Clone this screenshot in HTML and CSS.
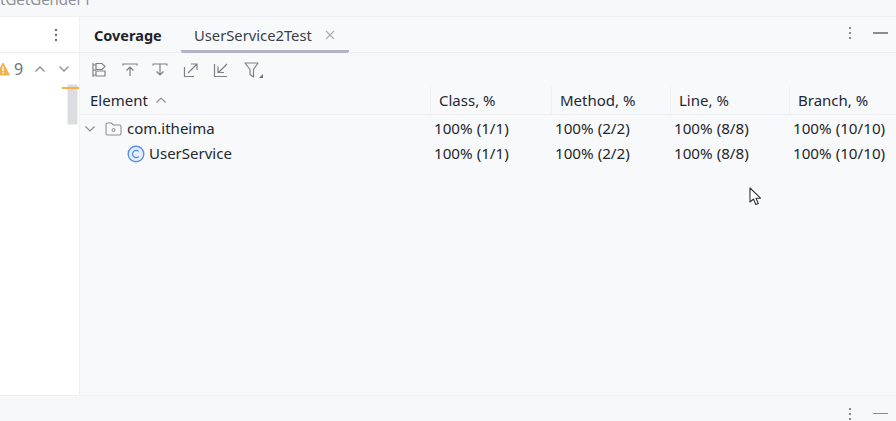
FILE: index.html
```html
<!DOCTYPE html>
<html lang="en">
<head>
<meta charset="utf-8">
<title>Coverage</title>
<link rel="stylesheet" href="styles.css">
</head>
<body>
<div class="app">
  <div class="topstrip"><span class="crumb">tGetGender1</span></div>
  <div class="main">
    <aside class="side">
      <div class="side-head">
        <svg class="ico16" viewBox="0 0 16 16"><g fill="#6c707e"><circle cx="8" cy="3" r="1.200"/><circle cx="8" cy="8" r="1.200"/><circle cx="8" cy="13" r="1.200"/></g></svg>
      </div>
      <div class="side-nav">
        <svg class="warn" viewBox="0 0 14 14"><path d="M7 1 L13.400 13 H.6 Z" fill="#f2b14a" stroke="#f2b14a" stroke-linejoin="round"/><rect x="6.300" y="4.500" width="1.400" height="4.600" fill="#fff"/><rect x="6.300" y="10" width="1.400" height="1.500" fill="#fff"/></svg>
        <span class="warn-count">9</span>
        <svg class="chev" viewBox="0 0 12 8"><path d="M1.500 6.500 L6 2 L10.500 6.500" fill="none" stroke="#8b8f99" stroke-width="1.300"/></svg>
        <svg class="chev" viewBox="0 0 12 8"><path d="M1.500 1.500 L6 6 L10.500 1.500" fill="none" stroke="#8b8f99" stroke-width="1.300"/></svg>
      </div>
      <div class="scroll-mark"></div>
      <div class="scroll-thumb"></div>
    </aside>
    <section class="panel">
      <div class="tabs">
        <span class="tab-title">Coverage</span>
        <span class="tab">UserService2Test
          <svg class="close" viewBox="0 0 10 10"><path d="M1 1 L9 9 M9 1 L1 9" stroke="#a9adb6" stroke-width="1.100"/></svg>
        </span>
        <span class="tab-actions">
          <svg class="ico16" viewBox="0 0 16 16"><g fill="#6c707e"><circle cx="8" cy="3" r="1.100"/><circle cx="8" cy="8" r="1.100"/><circle cx="8" cy="13" r="1.100"/></g></svg>
          <span class="minimize"></span>
        </span>
      </div>
      <div class="toolbar">
        <svg class="tool" viewBox="0 0 16 16"><path d="M2 1v14M2 3h3M2 8h3M2 13h3M5 1.500h6l3 3-3 3H5zM5 9h9v5H5z" fill="none" stroke="#7d818c" stroke-width="1.200"/></svg>
        <svg class="tool" viewBox="0 0 16 16"><path d="M1 3.500V2h14v1.500M8 14V5M4.500 8.500 8 5l3.500 3.500" fill="none" stroke="#7d818c" stroke-width="1.200"/></svg>
        <svg class="tool" viewBox="0 0 16 16"><path d="M1 3.500V2h14v1.500M8 2.500V13M4.500 9.500 8 13l3.500-3.500" fill="none" stroke="#7d818c" stroke-width="1.200"/></svg>
        <svg class="tool" viewBox="0 0 16 16"><path d="M1.500 5v9.500h9.500M5 11 14 2M8 2h6v6" fill="none" stroke="#7d818c" stroke-width="1.200"/></svg>
        <svg class="tool" viewBox="0 0 16 16"><path d="M1.500 2v12.500H14M14 2 5.500 10.500M5 4.500v6h6" fill="none" stroke="#7d818c" stroke-width="1.200"/></svg>
        <svg class="tool tool-wide" viewBox="0 0 20 16"><path d="M1 1h13L9.500 7.500V15L6 12.500V7.500Z" fill="none" stroke="#7d818c" stroke-width="1.200" stroke-linejoin="round"/><path d="M19 12v4h-4z" fill="#6c707e"/></svg>
      </div>
      <div class="grid grid-head">
        <div class="hcell first">Element
          <svg class="sort" viewBox="0 0 12 8"><path d="M1.500 6.500 6 2l4.500 4.500" fill="none" stroke="#8b8f99" stroke-width="1.200"/></svg>
        </div>
        <div class="hcell">Class, %</div>
        <div class="hcell">Method, %</div>
        <div class="hcell">Line, %</div>
        <div class="hcell">Branch, %</div>
      </div>
      <div class="grid row">
        <div class="cell name">
          <svg class="expander" viewBox="0 0 12 8"><path d="M1.500 1.500 6 6l4.500-4.500" fill="none" stroke="#8b8f99" stroke-width="1.200"/></svg>
          <svg class="folder" viewBox="0 0 17 16"><path d="M1 3.500C1 2.700 1.700 2 2.500 2h3.800l2 2h6.200c.8 0 1.500.7 1.500 1.500v7c0 .8-.7 1.500-1.500 1.500h-12C1.700 14 1 13.300 1 12.500Z" fill="none" stroke="#8b8f99" stroke-width="1.100"/><circle cx="8.500" cy="9" r="1.500" fill="none" stroke="#8b8f99"/></svg>
          com.itheima
        </div>
        <div class="cell">100% (1/1)</div>
        <div class="cell">100% (2/2)</div>
        <div class="cell">100% (8/8)</div>
        <div class="cell">100% (10/10)</div>
      </div>
      <div class="grid row">
        <div class="cell name nested">
          <svg class="classicon" viewBox="0 0 18 18"><circle cx="9" cy="9" r="7.800" fill="#e7effd" stroke="#5a8fe8" stroke-width="1.400"/><path d="M11.700 6.500A3.600 3.600 0 1 0 11.700 11.500" fill="none" stroke="#5a8fe8" stroke-width="1.300"/></svg>
          UserService
        </div>
        <div class="cell">100% (1/1)</div>
        <div class="cell">100% (2/2)</div>
        <div class="cell">100% (8/8)</div>
        <div class="cell">100% (10/10)</div>
      </div>
      <svg class="cursor" viewBox="0 0 14 20"><path d="M1 1v14l3.500-3 2.300 5.500 2.500-1-2.300-5.300H11.500Z" fill="#fff" stroke="#333" stroke-width="1.100" stroke-linejoin="round"/></svg>
    </section>
  </div>
  <div class="bottombar">
    <svg class="ico16" viewBox="0 0 16 16"><g fill="#6c707e"><circle cx="8" cy="3" r="1.100"/><circle cx="8" cy="8" r="1.100"/><circle cx="8" cy="13" r="1.100"/></g></svg>
    <span class="minimize"></span>
  </div>
</div>
</body>
</html>
```
FILE: styles.css
```css
* { box-sizing: border-box; }
html, body { margin: 0; height: 100%; }
body {
  font-family: "Noto Sans", "Open Sans", sans-serif;
  color: #1f2329;
  background: #f7f8fa;
  overflow: hidden;
}
.app { width: 896px; height: 421px; display: flex; flex-direction: column; overflow: hidden; }

.topstrip {
  height: 17px;
  flex: none;
  background: #f7f8fa;
  border-bottom: 1px solid #eff0f3;
  overflow: hidden;
}
.crumb {
  display: block;
  margin-top: -10px;
  font-size: 15px;
  line-height: 18px;
  color: #8c8f97;
}

.main { flex: 1; display: flex; min-height: 0; }

.side { width: 79px; flex: none; background: #fff; position: relative; }
.side-head {
  height: 36px;
  display: flex;
  align-items: center;
  justify-content: flex-end;
  padding-right: 15px;
  border-bottom: 1px solid #ebecf0;
}
.ico16 { width: 16px; height: 16px; display: block; flex: none; }
.side-nav { display: flex; align-items: center; height: 32px; margin-left: -4px; }
.warn { width: 14px; height: 14px; flex: none; }
.warn-count { font-size: 16px; color: #6c707e; margin-left: 4px; width: 14px; }
.chev { width: 12px; height: 8px; flex: none; margin-left: 6px; }
.chev + .chev { margin-left: 12px; }
.scroll-thumb {
  position: absolute;
  top: 67px;
  left: 67px;
  width: 11px;
  height: 41px;
  background: #dcdde0;
  border: 1px solid #eeeeef;
}
.scroll-mark {
  position: absolute;
  top: 70px;
  left: 62px;
  width: 17px;
  height: 2px;
  background: #f3b04c;
  z-index: 1;
}

.panel {
  flex: 1;
  position: relative;
  background: #f7f9fb;
  border-left: 1px solid #eff0f3;
  min-width: 0;
}
.tabs {
  height: 36px;
  display: flex;
  align-items: center;
  padding-left: 14px;
  border-bottom: 1px solid #ebedf1;
}
.tab-title { font-size: 14.500px; font-weight: 700; width: 87px; }
.tab {
  position: relative;
  height: 36px;
  width: 168px;
  padding: 3px 0 0 13px;
  font-size: 14.750px;
  line-height: 30px;
  color: #3a3f47;
  display: flex;
  align-items: center;
  gap: 13px;
  border-bottom: 3px solid #b2b4c6;
  border-radius: 0 0 2px 2px;
}
.close { width: 10px; height: 10px; flex: none; }
.tab-actions { margin-left: auto; display: flex; align-items: center; gap: 15px; padding-right: 8px; margin-top: -3px; }
.minimize { display: block; width: 15px; height: 1.500px; background: #8a8d95; }

.toolbar { height: 33px; display: flex; align-items: center; padding-left: 11px; gap: 14.500px; }
.tool { width: 16px; height: 16px; flex: none; }
.tool-wide { width: 20px; margin-top: 1px; }

.grid { display: grid; grid-template-columns: 350px 121px 119px 119px 1fr; }
.grid-head { height: 29px; margin-bottom: 1px; border-bottom: 1px solid #eceef2; }
.hcell {
  font-size: 15px;
  line-height: 28px;
  padding-left: 8px;
  border-left: 1px solid #eff1f4;
  color: #1f2735;
  white-space: nowrap;
}
.hcell.first { border-left: 0; padding-left: 10px; display: flex; align-items: center; gap: 7px; }
.sort { width: 12px; height: 8px; }

.row { height: 25px; align-items: center; }
.cell { font-size: 15.200px; line-height: 25px; padding-left: 4px; color: #24272c; white-space: nowrap; }
.cell.name { display: flex; align-items: center; font-size: 15px; }
.expander { width: 12px; height: 8px; margin-right: 9px; flex: none; }
.folder { width: 17px; height: 16px; margin-right: 5px; flex: none; }
.cell.nested { padding-left: 47px; }
.classicon { width: 18px; height: 18px; margin-right: 4px; flex: none; }

.cursor { position: absolute; left: 669px; top: 170px; width: 14px; height: 20px; }

.bottombar {
  height: 26px;
  flex: none;
  background: #f7f8fa;
  border-top: 1px solid #eff0f3;
  display: flex;
  align-items: center;
  justify-content: flex-end;
  gap: 15px;
  padding: 10px 8px 0 0;
}
```
